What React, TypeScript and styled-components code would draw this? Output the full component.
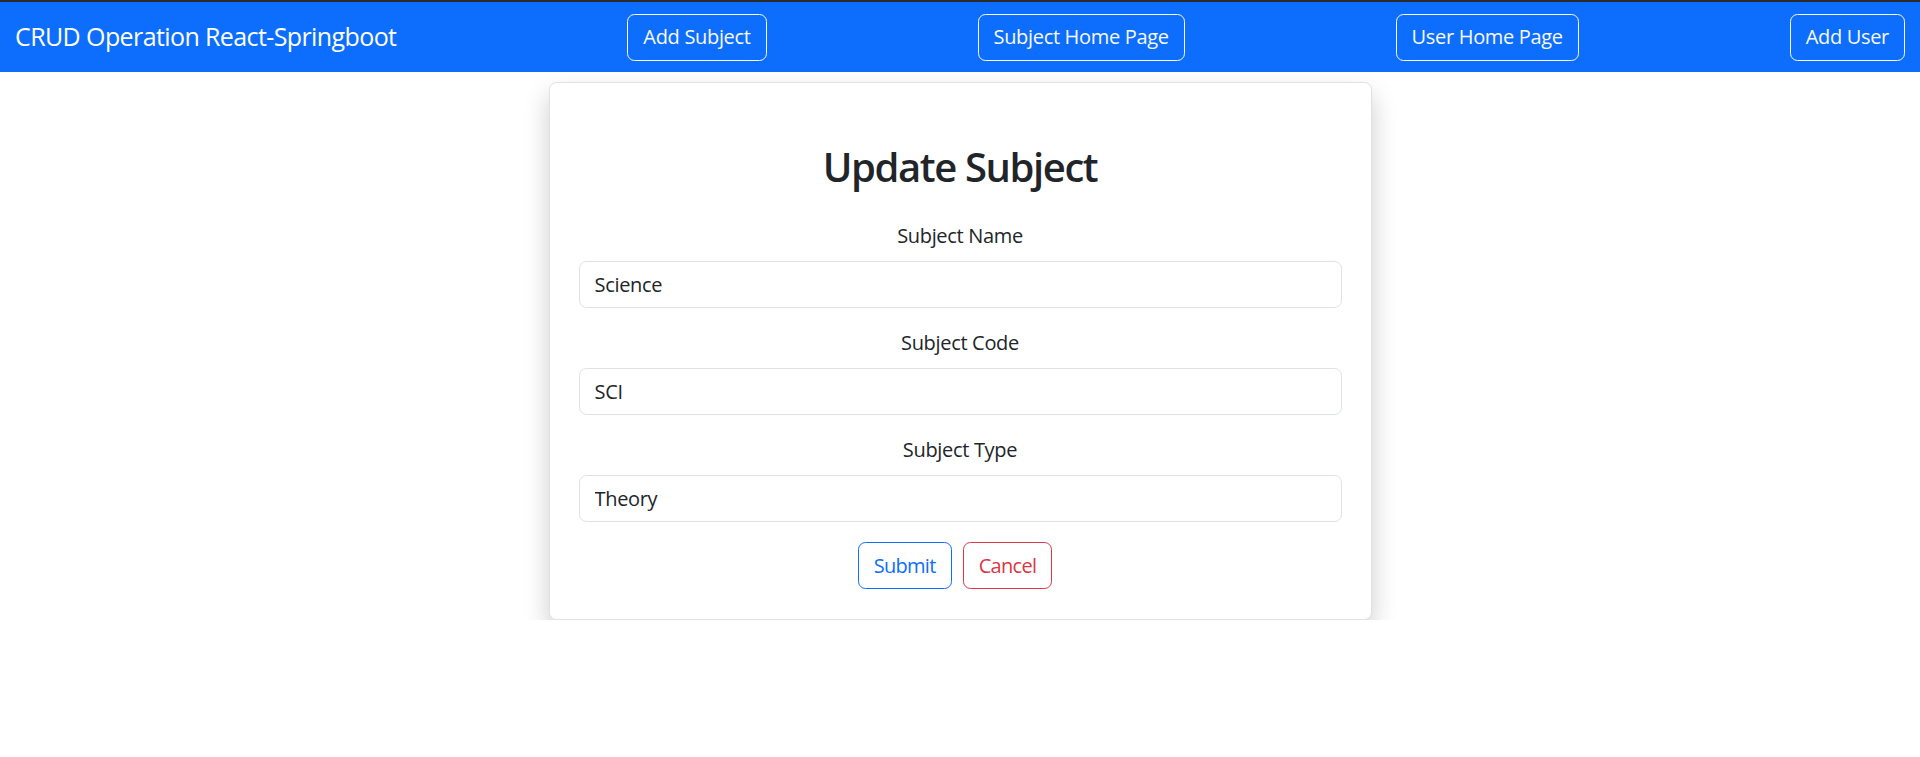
import React, { useState } from "react";
import styled, { createGlobalStyle } from "styled-components";

const GlobalStyle = createGlobalStyle`
  * {
    box-sizing: border-box;
  }
  body {
    margin: 0;
    background: #fff;
    color: #212529;
    font-family: "Open Sans", "Noto Sans", sans-serif;
    letter-spacing: -0.02em;
  }
`;

const Navbar = styled.nav`
  background-color: #0d6efd;
  border-top: 2px solid #2b2b2b;
  height: 72px;
  padding: 0 15px;
  display: flex;
  justify-content: space-between;
  align-items: center;
`;

const Brand = styled.span`
  color: #fff;
  font-size: 25px;
  line-height: 1.5;
  letter-spacing: -0.024em;
  margin-right: 20px;
`;

const NavButton = styled.button`
  background: transparent;
  color: #f8f9fa;
  border: 1px solid #f8f9fa;
  border-radius: 7.5px;
  padding: 7.5px 15px;
  font-family: inherit;
  letter-spacing: inherit;
  font-size: 20px;
  line-height: 1.5;
  cursor: pointer;
  &:hover {
    background-color: #f8f9fa;
    color: #000;
  }
`;

const Page = styled.main`
  display: flex;
  justify-content: center;
  padding-top: 10px;
`;

const Card = styled.div`
  width: 823px;
  background: #fff;
  border: 1px solid #dee2e6;
  border-radius: 7.5px;
  padding: 30px 29px;
  box-shadow: 0 12px 26px rgba(0, 0, 0, 0.2);
`;

const Title = styled.h2`
  margin: 30px;
  text-align: center;
  font-size: 40px;
  font-weight: 600;
  line-height: 1.2;
  letter-spacing: -0.035em;
  color: #212529;
`;

const Field = styled.div`
  margin-bottom: 20px;
  text-align: center;
`;

const Label = styled.label`
  display: block;
  margin-bottom: 10px;
  font-size: 20px;
  line-height: 1.5;
`;

const Input = styled.input`
  display: block;
  width: 100%;
  padding: 7.5px 15px;
  font-family: inherit;
  letter-spacing: inherit;
  font-size: 20px;
  line-height: 1.5;
  color: #212529;
  border: 1px solid #dee2e6;
  border-radius: 7.5px;
  outline: none;
  &:focus {
    border-color: #86b7fe;
    box-shadow: 0 0 0 5px rgba(13, 110, 253, 0.25);
  }
`;

const Actions = styled.div`
  display: flex;
  justify-content: center;
  gap: 11px;
  padding-right: 10px;
`;

const OutlineButton = styled.button<{ $color: string }>`
  background: transparent;
  color: ${(p) => p.$color};
  border: 1px solid ${(p) => p.$color};
  border-radius: 7.5px;
  padding: 7.5px 15px;
  font-family: inherit;
  letter-spacing: -0.035em;
  font-size: 20px;
  line-height: 1.5;
  cursor: pointer;
  &:hover {
    background-color: ${(p) => p.$color};
    color: #fff;
  }
`;

export default function App() {
  const [subject, setSubject] = useState({
    name: "Science",
    code: "SCI",
    type: "Theory",
  });

  const onChange = (e: React.ChangeEvent<HTMLInputElement>) => {
    setSubject({ ...subject, [e.target.name]: e.target.value });
  };

  return (
    <>
      <GlobalStyle />
      <Navbar>
        <Brand>CRUD Operation React-Springboot</Brand>
        <NavButton>Add Subject</NavButton>
        <NavButton>Subject Home Page</NavButton>
        <NavButton>User Home Page</NavButton>
        <NavButton>Add User</NavButton>
      </Navbar>
      <Page>
        <Card>
          <Title>Update Subject</Title>
          <form onSubmit={(e) => e.preventDefault()}>
            <Field>
              <Label htmlFor="name">Subject Name</Label>
              <Input id="name" name="name" value={subject.name} onChange={onChange} />
            </Field>
            <Field>
              <Label htmlFor="code">Subject Code</Label>
              <Input id="code" name="code" value={subject.code} onChange={onChange} />
            </Field>
            <Field>
              <Label htmlFor="type">Subject Type</Label>
              <Input id="type" name="type" value={subject.type} onChange={onChange} />
            </Field>
            <Actions>
              <OutlineButton type="submit" $color="#0d6efd">
                Submit
              </OutlineButton>
              <OutlineButton type="button" $color="#dc3545">
                Cancel
              </OutlineButton>
            </Actions>
          </form>
        </Card>
      </Page>
    </>
  );
}
